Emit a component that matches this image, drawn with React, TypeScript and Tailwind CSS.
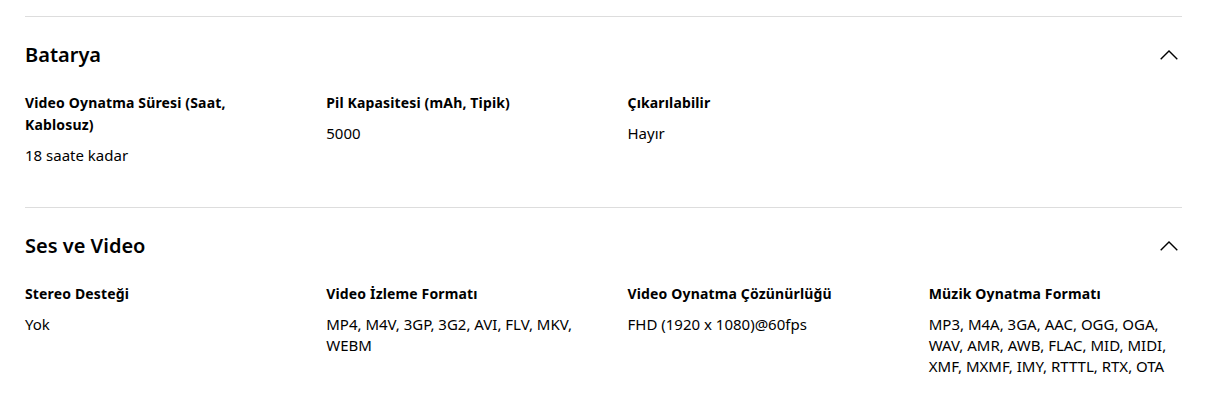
type Spec = { label: string; value: string };

const sections: { title: string; specs: Spec[] }[] = [
  {
    title: "Batarya",
    specs: [
      { label: "Video Oynatma Süresi (Saat, Kablosuz)", value: "18 saate kadar" },
      { label: "Pil Kapasitesi (mAh, Tipik)", value: "5000" },
      { label: "Çıkarılabilir", value: "Hayır" },
    ],
  },
  {
    title: "Ses ve Video",
    specs: [
      { label: "Stereo Desteği", value: "Yok" },
      { label: "Video İzleme Formatı", value: "MP4, M4V, 3GP, 3G2, AVI, FLV, MKV, WEBM" },
      { label: "Video Oynatma Çözünürlüğü", value: "FHD (1920 x 1080)@60fps" },
      {
        label: "Müzik Oynatma Formatı",
        value: "MP3, M4A, 3GA, AAC, OGG, OGA, WAV, AMR, AWB, FLAC, MID, MIDI, XMF, MXMF, IMY, RTTTL, RTX, OTA",
      },
    ],
  },
];

function Chevron() {
  return (
    <svg width="18" height="10" viewBox="0 0 18 10" fill="none" className="mr-[4px]">
      <polyline points="0.7,9.3 9,1 17.3,9.3" stroke="#000" strokeWidth="1.4" strokeLinejoin="miter" />
    </svg>
  );
}

export default function App() {
  return (
    <div
      className="min-h-[408px] bg-white px-[25px] pt-[16px] text-black"
      style={{ fontFamily: '"Noto Sans", "Open Sans", sans-serif' }}
    >
      {sections.map((s) => (
        <section key={s.title} className="border-t border-[#dddddd] pt-[25px] pb-[41px]">
          <div className="flex items-center justify-between">
            <h2 className="text-[20px] leading-[26px] font-semibold">{s.title}</h2>
            <Chevron />
          </div>
          <div className="mt-[24px] grid grid-cols-4 gap-x-[48px]">
            {s.specs.map((sp) => (
              <div key={sp.label} className="flex flex-col">
                <div className="text-[14px] leading-[22px] font-bold tracking-[0.15px]">{sp.label}</div>
                <div className="mt-[9px] text-[15px] leading-[21px]">{sp.value}</div>
              </div>
            ))}
          </div>
        </section>
      ))}
    </div>
  );
}
